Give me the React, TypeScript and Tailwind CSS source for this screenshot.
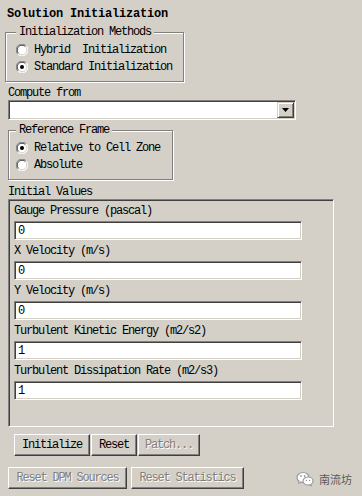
import React from "react";

const Radio = ({ checked }: { checked?: boolean }) => (
  <svg width="12" height="12" viewBox="0 0 12 12" className="shrink-0">
    <circle cx="6" cy="6" r="5.5" fill="#ffffff" />
    <path d="M1.8 10.2 A5.5 5.5 0 0 1 10.2 1.8" fill="none" stroke="#808080" strokeWidth="1" />
    <path d="M10.2 1.8 A5.5 5.5 0 0 1 1.8 10.2" fill="none" stroke="#ffffff" strokeWidth="1" />
    <path d="M2.6 9.4 A4.5 4.5 0 0 1 9.4 2.6" fill="none" stroke="#404040" strokeWidth="1" />
    <path d="M9.4 2.6 A4.5 4.5 0 0 1 2.6 9.4" fill="none" stroke="#d4d0c8" strokeWidth="1" />
    {checked && <circle cx="6" cy="6" r="2" fill="#000000" />}
  </svg>
);

const RadioRow = ({ label, checked }: { label: string; checked?: boolean }) => (
  <div className="flex items-center gap-[6px] h-[17px]">
    <Radio checked={checked} />
    <span className="leading-[14px] whitespace-pre">{label}</span>
  </div>
);

const Group = ({
  title,
  className,
  children,
}: {
  title: string;
  className: string;
  children: React.ReactNode;
}) => (
  <fieldset
    className={`border border-[#808080] shadow-[inset_1px_1px_0_#ffffff,1px_1px_0_#ffffff] ${className}`}
  >
    <legend className="px-[3px] leading-[14px] bg-[#d4d0c8] relative">{title}</legend>
    {children}
  </fieldset>
);

const Field = ({ label, value }: { label: string; value: string }) => (
  <div className="flex flex-col">
    <div className="h-[14px] leading-[14px] whitespace-pre">{label}</div>
    <div className="mt-[3px] mb-[4px] w-[288px] h-[19px] bg-white border border-t-[#808080] border-l-[#808080] border-b-[#ffffff] border-r-[#ffffff] shadow-[inset_1px_1px_0_#404040,inset_-1px_-1px_0_#d4d0c8] flex items-center pl-[3px]">
      <span className="leading-[14px]">{value}</span>
    </div>
  </div>
);

const Button = ({
  label,
  width,
  disabled,
}: {
  label: string;
  width: string;
  disabled?: boolean;
}) => (
  <button
    className={`${width} h-[22px] bg-[#d4d0c8] border border-t-[#ffffff] border-l-[#ffffff] border-b-[#404040] border-r-[#404040] shadow-[inset_-1px_-1px_0_#808080] flex items-center justify-center leading-[14px] ${
      disabled ? "text-[#808080] [text-shadow:1px_1px_0_#ffffff]" : "text-black"
    }`}
  >
    {label}
  </button>
);

const WeChatIcon = () => (
  <svg width="18" height="16" viewBox="0 0 18 16">
    <ellipse cx="7" cy="6.5" rx="6" ry="5" fill="#ffffff" stroke="#9a9a9a" strokeWidth="1.2" />
    <path d="M3.2 10 L2.4 12.6 L5.4 11" fill="#ffffff" stroke="#9a9a9a" strokeWidth="1" />
    <ellipse cx="12" cy="10" rx="5" ry="4" fill="#ffffff" stroke="#9a9a9a" strokeWidth="1.2" />
    <path d="M14.6 13.2 L15.6 15 L13 13.8" fill="#ffffff" stroke="#9a9a9a" strokeWidth="1" />
    <circle cx="5" cy="5" r="0.9" fill="#9a9a9a" />
    <circle cx="8.6" cy="5" r="0.9" fill="#9a9a9a" />
    <circle cx="10.4" cy="9.4" r="0.7" fill="#9a9a9a" />
    <circle cx="13.6" cy="9.4" r="0.7" fill="#9a9a9a" />
  </svg>
);

export default function App() {
  return (
    <div className="w-full h-[496px] pt-[2px] bg-[#d4d0c8] text-black text-[12px] tracking-[-1.2px] font-['Liberation_Mono','Noto_Sans_CJK_SC',monospace] overflow-hidden flex flex-col">
      <div className="pt-[5px] pl-[7px] h-[19px] leading-[14px] font-bold tracking-[-0.2px]">
        Solution Initialization
      </div>

      <Group title="Initialization Methods" className="mt-[4px] ml-[5px] w-[179px] pl-[10px] pt-[2px] pb-[6px]">
        <RadioRow label="Hybrid  Initialization" />
        <RadioRow label="Standard Initialization" checked />
      </Group>

      <div className="mt-[4px] pl-[8px] h-[14px] leading-[14px]">Compute from</div>
      <div className="ml-[8px] w-[288px] h-[20px] bg-white border border-t-[#808080] border-l-[#808080] border-b-[#ffffff] border-r-[#ffffff] shadow-[inset_1px_1px_0_#404040,inset_-1px_-1px_0_#d4d0c8] flex justify-end items-center pr-[1px]">
        <div className="w-[17px] h-[16px] bg-[#d4d0c8] border border-t-[#d4d0c8] border-l-[#d4d0c8] border-b-[#404040] border-r-[#404040] shadow-[inset_1px_1px_0_#ffffff,inset_-1px_-1px_0_#808080] flex items-center justify-center">
          <svg width="8" height="5" viewBox="0 0 8 5">
            <path d="M0 0 H7 L3.5 4 Z" fill="#000000" />
          </svg>
        </div>
      </div>

      <Group title="Reference Frame" className="mt-[3px] ml-[8px] w-[165px] pl-[7px] pt-[2px] pb-[6px]">
        <RadioRow label="Relative to Cell Zone" checked />
        <RadioRow label="Absolute" />
      </Group>

      <div className="mt-[5px] pl-[8px] h-[14px] leading-[14px]">Initial Values</div>
      <div className="ml-[8px] w-[326px] h-[228px] border border-t-[#808080] border-l-[#808080] border-b-[#ffffff] border-r-[#ffffff] shadow-[inset_1px_1px_0_#404040] pl-[5px] pt-[4px]">
        <Field label="Gauge Pressure (pascal)" value="0" />
        <Field label="X Velocity (m/s)" value="0" />
        <Field label="Y Velocity (m/s)" value="0" />
        <Field label="Turbulent Kinetic Energy (m2/s2)" value="1" />
        <Field label="Turbulent Dissipation Rate (m2/s3)" value="1" />
      </div>

      <div className="mt-[7px] ml-[14px] flex gap-[1px]">
        <Button label="Initialize" width="w-[76px]" />
        <Button label="Reset" width="w-[46px]" />
        <Button label="Patch..." width="w-[62px]" disabled />
      </div>

      <div className="mt-[11px] ml-[8px] flex items-center gap-[4px]">
        <Button label="Reset DPM Sources" width="w-[119px]" disabled />
        <Button label="Reset Statistics" width="w-[113px]" disabled />
        <div className="ml-auto mr-[10px] flex items-center gap-[5px] mt-[2px]">
          <WeChatIcon />
          <span className="text-[11px] tracking-normal text-[#5a5a5a] font-['Noto_Sans_CJK_SC',sans-serif]">
            南流坊
          </span>
        </div>
      </div>
    </div>
  );
}
